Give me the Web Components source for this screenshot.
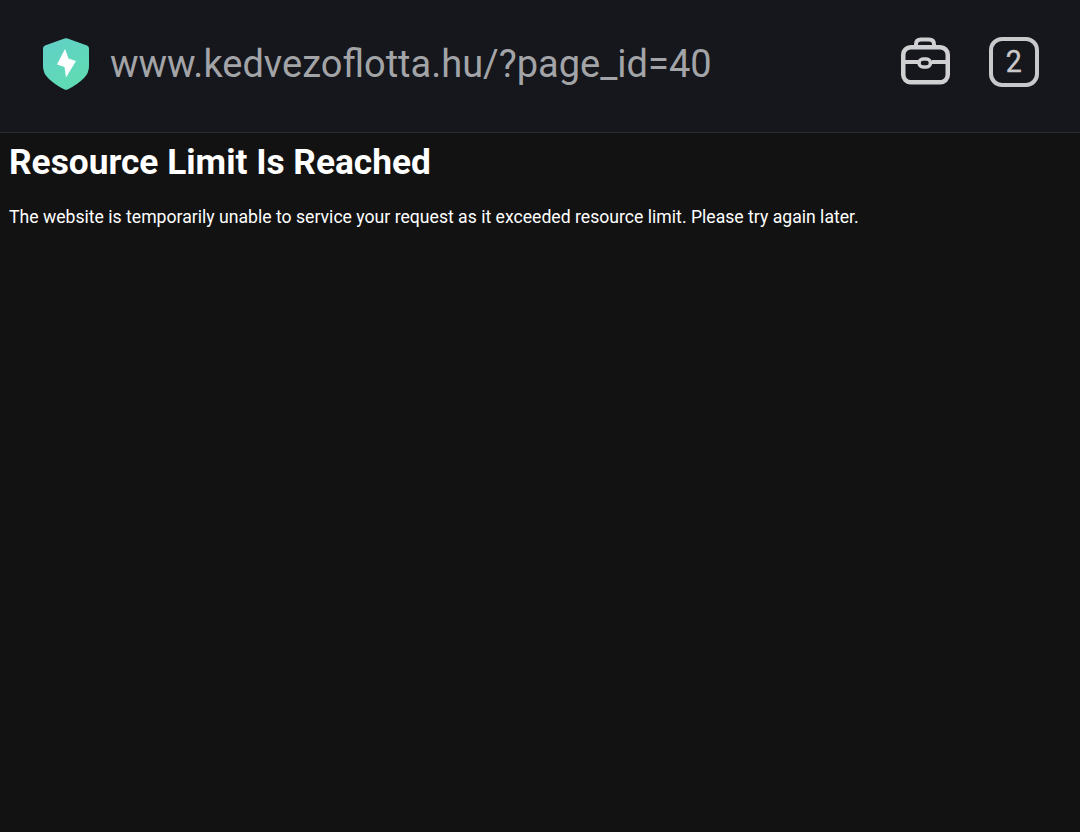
<!DOCTYPE html>
<html>
<head>
<meta charset="utf-8">
<style>
	html, body { margin: 0; height: 100%; background: #121212; }
	body { font-family: Roboto, sans-serif; color: #fff; }
</style>
</head>
<body>
<browser-bar url="www.kedvezoflotta.hu/?page_id=40" tabs="2"></browser-bar>
<error-page heading="Resource Limit Is Reached">The website is temporarily unable to service your request as it exceeded resource limit. Please try again later.</error-page>

<template id="bar-template">
	<style>
		:host {
			display: flex;
			align-items: center;
			height: 128px;
			padding: 0 41px 4px 43px;
			background: #15171c;
			border-bottom: 1px solid #2b2c31;
		}
		.shield { width: 46px; height: 52px; flex: none; }
		.url {
			flex: 1;
			margin-left: 21px;
			font-size: 38px;
			line-height: 44px;
			color: #a3a4a7;
			white-space: nowrap;
		}
		.tools { display: flex; align-items: center; gap: 38px; margin-bottom: 4px; }
		.case { width: 50px; height: 50px; display: block; margin-left: -1px; margin-right: 1px; }
		.tabs {
			width: 50px;
			height: 50px;
			box-sizing: border-box;
			border: 4.5px solid #c9c9cb;
			border-radius: 13px;
			display: flex;
			align-items: center;
			justify-content: center;
			padding-bottom: 1px;
			font-size: 31px;
			line-height: 36px;
			color: #c9c9cb;
		}
		.count { display: block; transform: scaleX(.92); -webkit-text-stroke: .4px #c9c9cb; }
	</style>
	<svg class="shield" viewBox="0 0 46 52">
		<defs>
			<linearGradient id="shieldFill" x1="0" y1="0" x2="0.6" y2="1">
				<stop offset="0" stop-color="#62cfc9"/>
				<stop offset="1" stop-color="#5fdcb2"/>
			</linearGradient>
		</defs>
		<path d="M21.5 .5 Q23 0 24.5 .5 L44 7.5 Q46 8.3 46 10.5 V28 Q46 35 41 40 Q34 47 24.5 51.5 Q23 52 21.5 51.5 Q12 47 5 40 Q0 35 0 28 V10.5 Q0 8.3 2 7.5 Z" fill="url(#shieldFill)"/>
		<path d="M22 11 L14 26.5 L21.5 29 L23 39.5 L33 23 L25.5 20.5 Z" fill="#fff"/>
	</svg>
	<div class="url"></div>
	<div class="tools">
		<svg class="case" viewBox="0 0 50 50" fill="none" stroke="#d0d0d2" stroke-width="4.5">
			<path d="M16 10 V7 Q16 2.5 21 2.5 H29 Q34 2.5 34 7 V10" stroke-width="4"/>
			<rect x="3.25" y="10.25" width="44.5" height="35" rx="7.5"/>
			<path d="M3 25 H18 M32 25 H48" stroke-width="4"/>
			<rect x="19" y="22" width="11.5" height="8" rx="4" stroke-width="3.5"/>
		</svg>
		<div class="tabs"><span class="count"></span></div>
	</div>
</template>

<template id="page-template">
	<style>
		:host { display: block; padding: 0 9px; }
		h1 {
			margin: 0;
			padding-top: 9px;
			font-size: 35.28px;
			line-height: 41px;
			font-weight: 700;
		}
		p {
			margin: 23px 0 0;
			font-size: 17.64px;
			line-height: 22px;
		}
	</style>
	<h1></h1>
	<p><slot></slot></p>
</template>

<script>
class BrowserBar extends HTMLElement {
	constructor() {
		super();
		const shadowRoot = this.attachShadow({mode: 'open'});
		shadowRoot.appendChild(document.getElementById('bar-template').content.cloneNode(true));
	}

	connectedCallback() {
		this.shadowRoot.querySelector('.url').textContent = this.getAttribute('url');
		this.shadowRoot.querySelector('.count').textContent = this.getAttribute('tabs');
	}
}
window.customElements.define('browser-bar', BrowserBar);

class ErrorPage extends HTMLElement {
	constructor() {
		super();
		const shadowRoot = this.attachShadow({mode: 'open'});
		shadowRoot.appendChild(document.getElementById('page-template').content.cloneNode(true));
	}

	connectedCallback() {
		this.shadowRoot.querySelector('h1').textContent = this.getAttribute('heading');
	}
}
window.customElements.define('error-page', ErrorPage);
</script>
</body>
</html>
